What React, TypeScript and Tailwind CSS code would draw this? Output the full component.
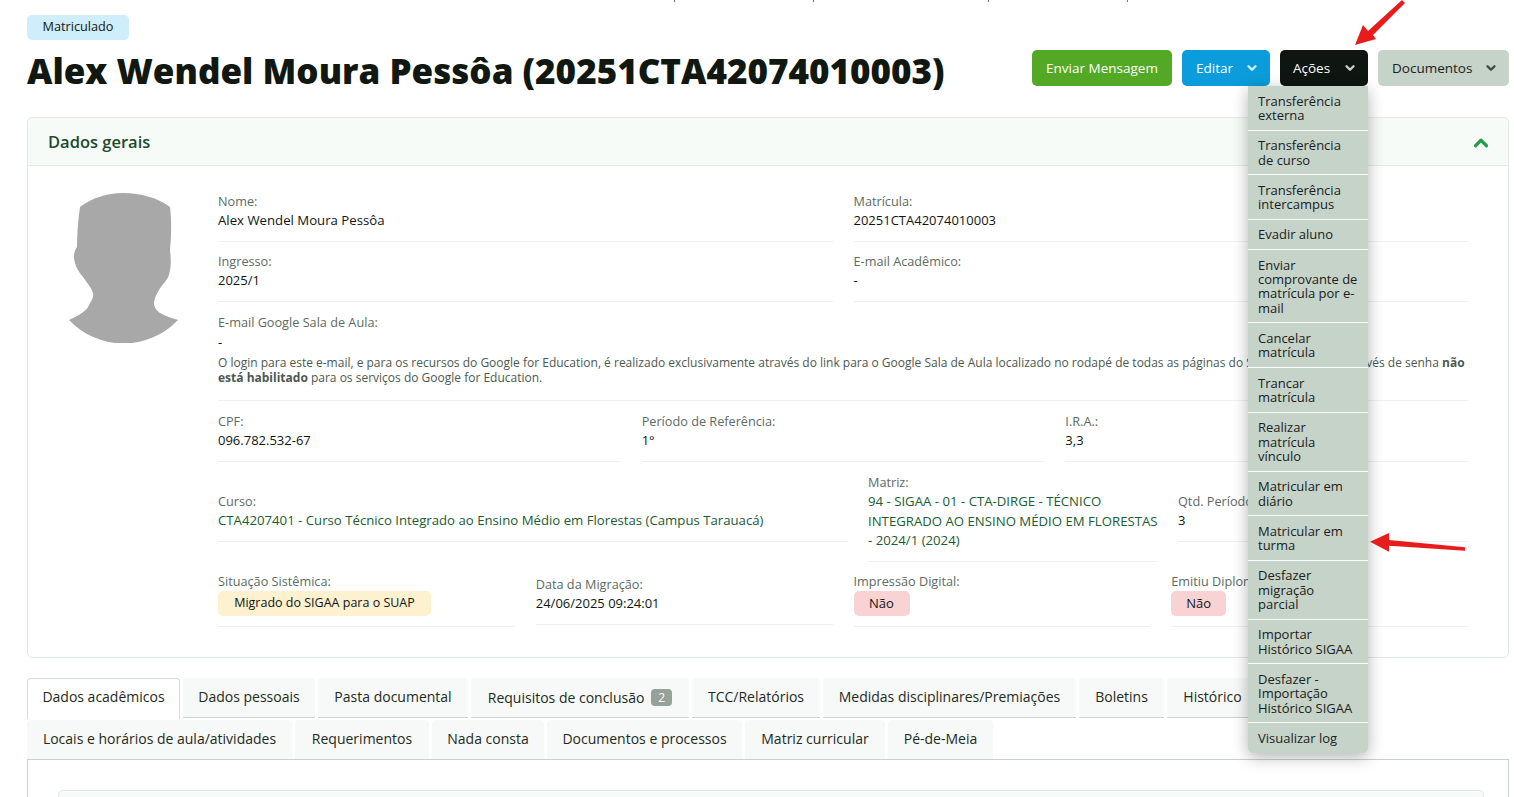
import React from 'react';
import { ChevronDown, ChevronUp } from 'lucide-react';

const menuItems = [
  'Transferência externa',
  'Transferência de curso',
  'Transferência intercampus',
  'Evadir aluno',
  'Enviar comprovante de matrícula por e-mail',
  'Cancelar matrícula',
  'Trancar matrícula',
  'Realizar matrícula vínculo',
  'Matricular em diário',
  'Matricular em turma',
  'Desfazer migração parcial',
  'Importar Histórico SIGAA',
  'Desfazer - Importação Histórico SIGAA',
  'Visualizar log',
];

const Field: React.FC<{ label: string; value?: string; className?: string; children?: React.ReactNode }> = ({ label, value, className, children }) => (
  <div className={`border-b border-[#eef1ef] pb-[10px] ${className ?? ''}`}>
    <div className="whitespace-nowrap text-[12.7px] leading-[19px] text-[#5e6a63]">{label}</div>
    {children ?? <div className="mb-[1px] text-[13px] leading-[19px] text-[#111512]">{value}</div>}
  </div>
);

const Tab: React.FC<{ className: string; children: React.ReactNode }> = ({ className, children }) => (
  <div className={`flex shrink-0 items-center justify-center whitespace-nowrap rounded-t bg-[#f7f9f8] text-sm font-medium text-[#1d2a22] ${className}`}>{children}</div>
);

function Avatar() {
  return (
    <svg width="120" height="150" viewBox="0 0 120 150" className="mt-[1.5px] shrink-0 blur-[0.7px]">
      <path d="M58 0 C76 0 93 5 105 14 C107 30 106 45 105 57 C106 66 106 72 105 77 C104 84 101 88 99 90 C95 95 90 102 89 110 C89 118 96 122 113 127 A75 75 0 0 1 4 127 C14 122 22 118 24 112 C27 107 29 104 28 100 C26 94 22 90 18 84 C14 79 11 75 10 70 C8 64 9 58 12 54 C12 42 13 28 15 14 C27 5 42 0 58 0 Z" fill="#a8a8a8" />
    </svg>
  );
}

export default function App() {
  return (
    <div className="relative min-h-[797px] overflow-hidden bg-white pl-[27px] pr-[5px] pt-[15px] font-['Open_Sans',sans-serif] text-[#111512]">
      <div className="flex h-[25px] w-[102px] items-center justify-center rounded-[5px] bg-[#cfeefc] pb-[1px] text-[12.7px]">Matriculado</div>

      <div className="mt-[10px] flex h-[36px] items-center justify-between">
        <h1 className="whitespace-nowrap pt-[5px] text-[35px] font-extrabold leading-none text-[#111811]">Alex Wendel Moura Pessôa (20251CTA42074010003)</h1>
        <div className="flex gap-[10px] text-[13.5px]">
          <button className="h-9 w-[140px] rounded-[5px] bg-[#53a925] text-white">Enviar Mensagem</button>
          <button className="flex h-9 w-[88px] items-center justify-between rounded-[5px] bg-[#0b9ddb] pl-[14px] pr-[11px] text-white">
            Editar <ChevronDown size={14} strokeWidth={4} className="text-[#cfeefc]" />
          </button>
          <div className="relative">
            <button className="flex h-9 w-[88px] items-center justify-between rounded-[5px] bg-[#0f1612] pl-[13px] pr-[11px] text-white">
              Ações <ChevronDown size={14} strokeWidth={4} className="text-[#c6d3c9]" />
            </button>
            <div className="absolute right-0 top-full z-10 w-[120px] overflow-hidden rounded-b-[5px] bg-[#c6d3c9] text-[13px] leading-[14.4px] text-[#1a211c] shadow-[0_4px_16px_rgba(0,0,0,0.3)]">
              {menuItems.map((item, i) => (
                <div key={item} className={`px-[10px] pb-[7.1px] pt-[7.7px] ${i < menuItems.length - 1 ? 'border-b border-white' : ''}`}>{item}</div>
              ))}
            </div>
          </div>
          <button className="flex h-9 w-[131px] items-center justify-between rounded-[5px] bg-[#c6d3c9] pl-[14px] pr-[11px] text-[#1a211c]">
            Documentos <ChevronDown size={14} strokeWidth={4} className="text-[#3c4a40]" />
          </button>
        </div>
      </div>

      <section className="mt-[31px] h-[541px] rounded-[5px] border border-[#e3e9e5]">
        <div className="flex h-[48px] items-center justify-between rounded-t-[5px] border-b border-[#e3e9e5] bg-[#f6fbf8] pl-5 pr-[16px]">
          <h2 className="pt-[1px] text-[16.5px] font-semibold text-[#1c4a2c]">Dados gerais</h2>
          <ChevronUp size={22} strokeWidth={3.5} className="mt-[2px] text-[#2a9a4a]" />
        </div>
        <div className="flex pl-[37px] pr-[40px] pt-[25.5px]">
          <Avatar />
          <div className="ml-[33px] flex-1">
            <div className="flex gap-[21px]">
              <Field label="Nome:" className="flex-1">
                <div className="mb-[1px] text-[13.2px] leading-[19px]">Alex Wendel Moura Pessôa</div>
              </Field>
              <Field label="Matrícula:" value="20251CTA42074010003" className="flex-1" />
            </div>
            <div className="mt-[10.5px] flex gap-[21px]">
              <Field label="Ingresso:" value="2025/1" className="flex-1" />
              <Field label="E-mail Acadêmico:" value="-" className="flex-1" />
            </div>
            <div className="mt-[10.5px]">
              <Field label="E-mail Google Sala de Aula:" className="!pb-[15px]">
                <div className="text-[13px] leading-[20px]">-</div>
                <p className="mt-[3.5px] text-[12px] leading-[15px] text-[#4c5850]">
                  O login para este e-mail, e para os recursos do Google for Education, é realizado exclusivamente através do link para o Google Sala de Aula localizado no rodapé de todas as páginas do SUAP, e o acesso através de senha <strong>não está habilitado</strong> para os serviços do Google for Education.
                </p>
              </Field>
            </div>
            <div className="mt-[10.5px] flex gap-[21px]">
              <Field label="CPF:" value="096.782.532-67" className="flex-1" />
              <Field label="Período de Referência:" value="1°" className="flex-1" />
              <Field label="I.R.A.:" value="3,3" className="flex-1" />
            </div>
            <div className="mt-[11.5px] flex items-center gap-[20px]">
              <Field label="Curso:" className="w-[630px]">
                <div className="mb-[1px] text-[13.2px] leading-[19px] text-[#1a5c33]">CTA4207401 - Curso Técnico Integrado ao Ensino Médio em Florestas (Campus Tarauacá)</div>
              </Field>
              <Field label="Matriz:" className="w-[290px]">
                <div className="text-[13.2px] leading-[19.5px] text-[#1a5c33]">94 - SIGAA - 01 - CTA-DIRGE - TÉCNICO INTEGRADO AO ENSINO MÉDIO EM FLORESTAS - 2024/1 (2024)</div>
              </Field>
              <Field label="Qtd. Períodos:" value="3" className="flex-1" />
            </div>
            <div className="mt-[10.5px] flex items-center gap-[21px]">
              <Field label="Situação Sistêmica:" className="flex-1">
                <div className="flex h-[25px] w-[213px] items-center justify-center rounded-[5px] bg-[#fdf1cf] text-[12.5px]">Migrado do SIGAA para o SUAP</div>
              </Field>
              <Field label="Data da Migração:" value="24/06/2025 09:24:01" className="flex-1" />
              <Field label="Impressão Digital:" className="flex-1">
                <div className="flex h-[25px] w-[56px] items-center justify-center rounded-[5px] bg-[#f9d2d4] text-[13px]">Não</div>
              </Field>
              <Field label="Emitiu Diploma:" className="flex-1">
                <div className="flex h-[25px] w-[55px] items-center justify-center rounded-[5px] bg-[#f9d2d4] text-[13px]">Não</div>
              </Field>
            </div>
          </div>
        </div>
      </section>

      <nav className="mt-[20px]">
        <div className="flex h-[40px] gap-[3px]">
          <div className="flex h-[41px] w-[153px] shrink-0 items-center justify-center rounded-t border border-b-0 border-[#d5ddd7] bg-white pb-[4px] text-sm font-medium text-[#1d2a22]">Dados acadêmicos</div>
          <Tab className="w-[132px] border-b border-[#cdd5cf] pb-[2px]">Dados pessoais</Tab>
          <Tab className="w-[150px] border-b border-[#cdd5cf] pb-[2px]">Pasta documental</Tab>
          <Tab className="w-[218px] border-b border-[#cdd5cf]">
            Requisitos de conclusão
            <span className="ml-[7px] rounded bg-[#96a298] px-[7px] text-xs font-normal leading-[17px] text-white">2</span>
          </Tab>
          <Tab className="w-[128px] border-b border-[#cdd5cf] pb-[2px]">TCC/Relatórios</Tab>
          <Tab className="w-[253px] border-b border-[#cdd5cf] pb-[2px]">Medidas disciplinares/Premiações</Tab>
          <Tab className="w-[85px] border-b border-[#cdd5cf] pb-[2px]">Boletins</Tab>
          <Tab className="w-[91px] border-b border-[#cdd5cf] pb-[2px]">Histórico</Tab>
        </div>
        <div className="mt-[2px] flex h-[40px] gap-[3px] border-b border-[#c9d1cb]">
          <Tab className="w-[265px] pb-[2px]">Locais e horários de aula/atividades</Tab>
          <Tab className="w-[134px] pb-[2px]">Requerimentos</Tab>
          <Tab className="w-[112px] pb-[2px]">Nada consta</Tab>
          <Tab className="w-[195px] pb-[2px]">Documentos e processos</Tab>
          <Tab className="w-[140px] pb-[2px]">Matriz curricular</Tab>
          <Tab className="w-[105px] pb-[2px]">Pé-de-Meia</Tab>
        </div>
      </nav>

      <div className="h-[60px] border-x border-[#c9d1cb] pl-[30px] pr-[24px] pt-[30px]">
        <div className="h-[30px] rounded-t-[5px] border border-[#e3e9e5] bg-[#f6fbf8]" />
      </div>

      <svg className="pointer-events-none absolute inset-0 z-20" width="1514" height="797" viewBox="0 0 1514 797">
        <path d="M1355 45 L1363 25 L1368 31 L1402 0 L1405 3 L1373 35 L1376 39 Z" fill="#e81c1c" />
        <path d="M1370 541.7 L1389 533 L1389 540 L1465 547.3 L1465 550.7 L1389 545.7 L1389 551.7 Z" fill="#e81c1c" />
        <path d="M674.5 0 V2 M813.5 0 V2 M988.5 0 V2 M1127.5 0 V2" stroke="#6b7a90" strokeWidth="1" />
      </svg>
    </div>
  );
}
